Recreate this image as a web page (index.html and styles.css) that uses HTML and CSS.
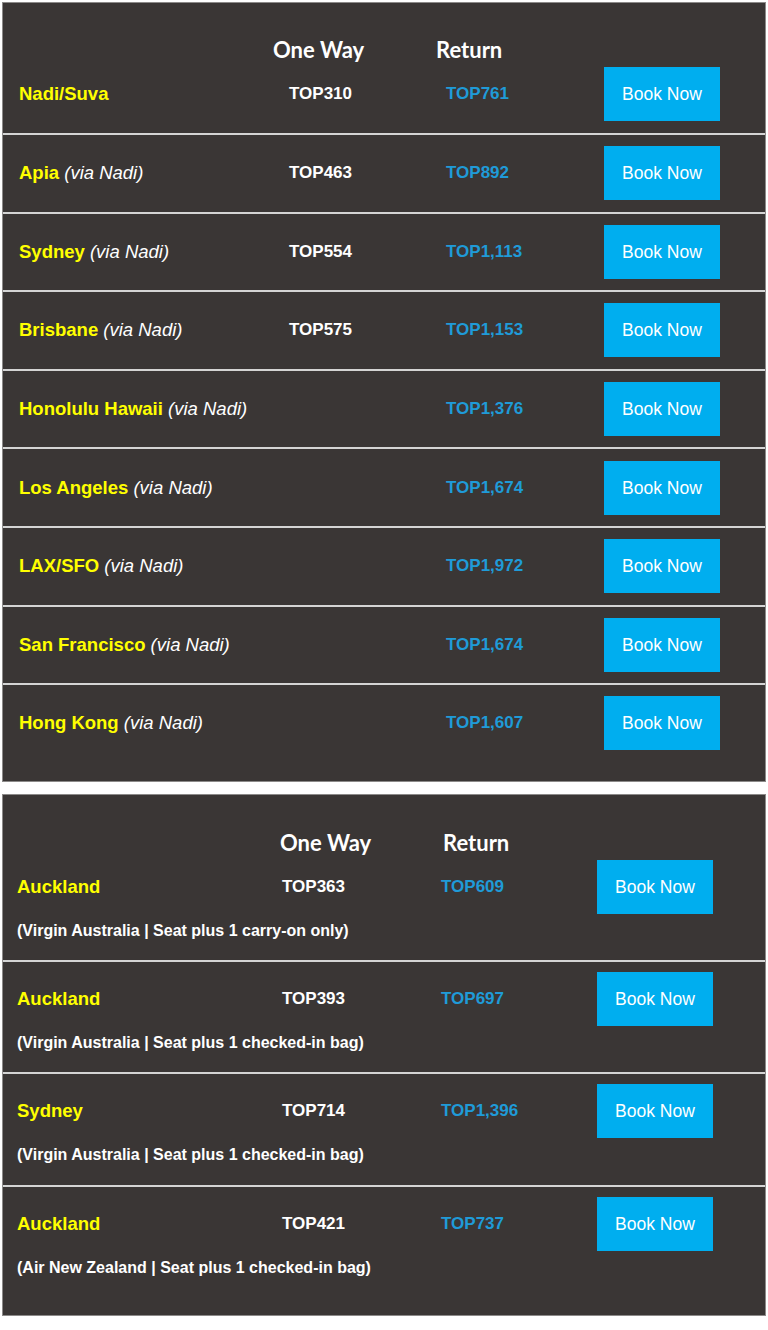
FILE: index.html
```
<!DOCTYPE html>
<html lang="en">

<head>
    <meta charset="UTF-8">
    <meta name="viewport" content="width=device-width, initial-scale=1.0">
    <title>Fares from Tonga</title>
    <link rel="stylesheet" href="styles.css">
</head>

<body>
    <!-- Fiji Airways fares -->
    <div class="fares fares-fj">
        <div class="head">
            <span></span>
            <span class="headOne">One Way</span>
            <span class="headReturn">Return</span>
        </div>
        <div class="row first">
            <div class="city">Nadi/Suva</div>
            <div class="price">TOP310</div>
            <div class="price ret">TOP761</div>
            <a class="book" href="#">Book Now</a>
        </div>
        <div class="row">
            <div class="city">Apia <i>(via Nadi)</i></div>
            <div class="price">TOP463</div>
            <div class="price ret">TOP892</div>
            <a class="book" href="#">Book Now</a>
        </div>
        <div class="row">
            <div class="city">Sydney <i>(via Nadi)</i></div>
            <div class="price">TOP554</div>
            <div class="price ret">TOP1,113</div>
            <a class="book" href="#">Book Now</a>
        </div>
        <div class="row">
            <div class="city">Brisbane <i>(via Nadi)</i></div>
            <div class="price">TOP575</div>
            <div class="price ret">TOP1,153</div>
            <a class="book" href="#">Book Now</a>
        </div>
        <div class="row">
            <div class="city">Honolulu Hawaii <i>(via Nadi)</i></div>
            <div class="price"></div>
            <div class="price ret">TOP1,376</div>
            <a class="book" href="#">Book Now</a>
        </div>
        <div class="row">
            <div class="city">Los Angeles <i>(via Nadi)</i></div>
            <div class="price"></div>
            <div class="price ret">TOP1,674</div>
            <a class="book" href="#">Book Now</a>
        </div>
        <div class="row">
            <div class="city">LAX/SFO <i>(via Nadi)</i></div>
            <div class="price"></div>
            <div class="price ret">TOP1,972</div>
            <a class="book" href="#">Book Now</a>
        </div>
        <div class="row">
            <div class="city">San Francisco <i>(via Nadi)</i></div>
            <div class="price"></div>
            <div class="price ret">TOP1,674</div>
            <a class="book" href="#">Book Now</a>
        </div>
        <div class="row">
            <div class="city">Hong Kong <i>(via Nadi)</i></div>
            <div class="price"></div>
            <div class="price ret">TOP1,607</div>
            <a class="book" href="#">Book Now</a>
        </div>
    </div>

    <!-- Virgin Australia / Air New Zealand fares -->
    <div class="fares fares-nz">
        <div class="head">
            <span></span>
            <span class="headOne">One Way</span>
            <span class="headReturn">Return</span>
        </div>
        <div class="row first">
            <div class="city">Auckland</div>
            <div class="price">TOP363</div>
            <div class="price ret">TOP609</div>
            <a class="book" href="#">Book Now</a>
            <div class="note">(Virgin Australia | Seat plus 1 carry-on only)</div>
        </div>
        <div class="row">
            <div class="city">Auckland</div>
            <div class="price">TOP393</div>
            <div class="price ret">TOP697</div>
            <a class="book" href="#">Book Now</a>
            <div class="note">(Virgin Australia | Seat plus 1 checked-in bag)</div>
        </div>
        <div class="row">
            <div class="city">Sydney</div>
            <div class="price">TOP714</div>
            <div class="price ret">TOP1,396</div>
            <a class="book" href="#">Book Now</a>
            <div class="note">(Virgin Australia | Seat plus 1 checked-in bag)</div>
        </div>
        <div class="row">
            <div class="city">Auckland</div>
            <div class="price">TOP421</div>
            <div class="price ret">TOP737</div>
            <a class="book" href="#">Book Now</a>
            <div class="note">(Air New Zealand | Seat plus 1 checked-in bag)</div>
        </div>
    </div>
</body>

</html>
```

FILE: styles.css
```
body {
    margin: 0;
    padding: 2px 2px 0 2px;
    background-color: #ffffff;
    font-family: "Liberation Sans", Arial, sans-serif;
    color: #ffffff;
}

.fares {
    background-color: #3a3635;
    border: 1px solid #8c8a89;
    padding-top: 37px;
    padding-bottom: 19px;
}

.fares-nz {
    margin-top: 12px;
    padding-top: 38px;
    padding-bottom: 18px;
}

/* 表头 */
.head {
    display: grid;
    height: 20px;
    margin-bottom: -5px;
    line-height: 20px;
    font-family: Lato, "Liberation Sans", sans-serif;
    font-size: 22px;
    font-weight: 700;
}

.fares-fj .head {
    padding-left: 17px;
    grid-template-columns: 253px 163px 1fr;
}

.fares-nz .head {
    padding-left: 14px;
    grid-template-columns: 263px 163px 1fr;
}

/* 每一行 */
.row {
    display: grid;
    align-items: center;
    box-sizing: border-box;
    border-top: 2px solid #d4d4d4;
}

.row.first {
    border-top: none;
}

.fares-fj .row {
    height: 78.6px;
    padding-left: 16px;
    grid-template-columns: 270px 157px 158px 116px;
}

.fares-fj .row.first {
    height: 78px;
}

.fares-nz .row {
    height: 112.5px;
    padding-left: 14px;
    padding-top: 10px;
    grid-template-columns: 265px 159px 156px 116px;
    grid-template-rows: 54px auto;
    align-content: start;
}

.fares-nz .row.first {
    height: 112px;
    padding-top: 12px;
}

.city {
    color: #ffff00;
    font-size: 18.5px;
    font-weight: 700;
    white-space: nowrap;
}

.city i {
    color: #ffffff;
    font-weight: 400;
}

.price {
    font-size: 17px;
    font-weight: 700;
    color: #ffffff;
}

.price.ret {
    color: #1f9bd8;
}

.book {
    display: block;
    width: 116px;
    height: 54px;
    line-height: 54px;
    text-align: center;
    background-color: #00aeef;
    color: #ffffff;
    font-size: 17.5px;
    text-decoration: none;
}

.note {
    grid-column: 1 / -1;
    margin-top: 7px;
    line-height: 20px;
    font-size: 16px;
    font-weight: 700;
}
```
